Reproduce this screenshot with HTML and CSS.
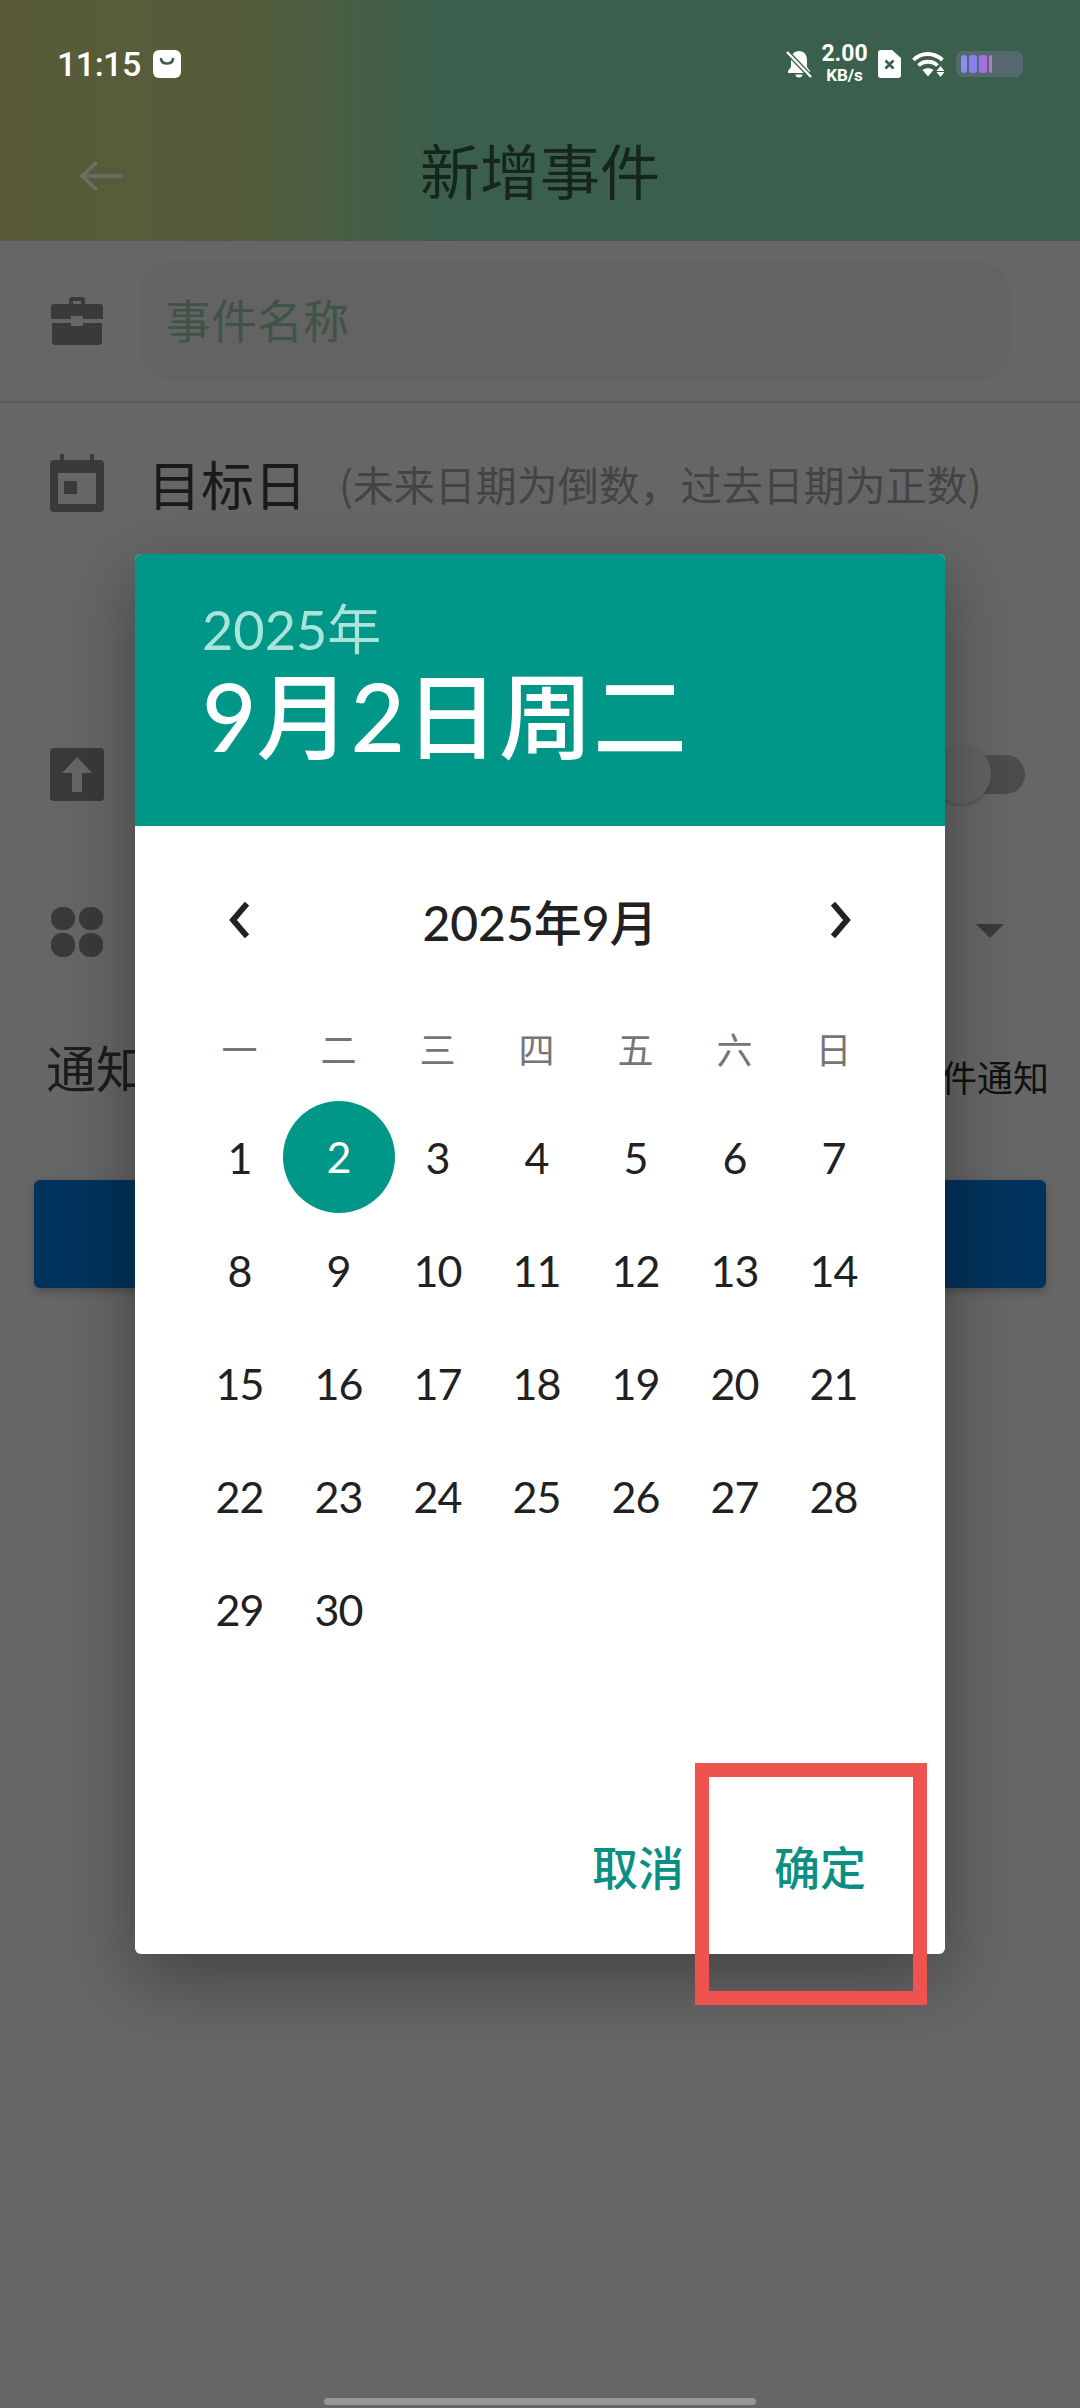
FILE: index.html
```html
<!DOCTYPE html>
<html lang="zh-CN">
<head>
<meta charset="UTF-8">
<meta name="viewport" content="width=device-width, initial-scale=1.0">
<title>新增事件</title>
<link rel="stylesheet" href="styles.css">
</head>
<body>
<div class="phone">
  <header class="top">
    <div class="status">
      <div class="status-left">
        <span class="clock">11:15</span>
        <svg class="note" viewBox="0 0 28 28"><rect width="28" height="28" rx="6" fill="#fff"/><path d="M8 9c1 6 11 6 12 0" fill="none" stroke="#3f5f4a" stroke-width="2.6" stroke-linecap="round"/></svg>
      </div>
      <div class="status-right">
        <svg class="bell" viewBox="0 0 26 28"><path d="M13 1c-5 0-8 3.500-8 9v7l-3 4v2h22v-2l-3-4v-7c0-5.500-3-9-8-9zM9.500 24.500a3.500 3 0 0 0 7 0z" fill="#fff"/><path d="M1 2l24 25" stroke="#3a604d" stroke-width="5"/><path d="M1 2l24 25" stroke="#fff" stroke-width="2.400"/></svg>
        <div class="speed"><span class="speed-num">2.00</span><span class="speed-unit">KB/s</span></div>
        <svg class="sim" viewBox="0 0 23 28"><path d="M3 0h11l9 8v17a3 3 0 0 1-3 3H3a3 3 0 0 1-3-3V3a3 3 0 0 1 3-3z" fill="#fff"/><path d="M7.500 10.500l8 8M15.500 10.500l-8 8" stroke="#3a604d" stroke-width="2.600"/></svg>
        <svg class="wifi" viewBox="0 0 34 26"><path d="M1.500 9c8-8 20-8 29 0M6.500 14.500c5-5 14-5 19 0" fill="none" stroke="#fff" stroke-width="3.800"/><path d="M10.500 19c3-2.500 8-2.500 11 0l-5.500 6.500z" fill="#fff"/><path d="M28.500 15l4 5h-8zM28.500 26l4-5h-8z" fill="#fff"/></svg>
        <div class="battery"><span class="cell c1"></span><span class="cell c2"></span><span class="cell c3"></span><span class="cell c4"></span></div>
      </div>
    </div>
    <div class="appbar">
      <svg class="back" viewBox="0 0 44 32"><path d="M18 2L3 16l15 14M3 16h41" fill="none" stroke="#667263" stroke-width="3.500"/></svg>
      <h1>新增事件</h1>
    </div>
  </header>

  <main class="form">
    <div class="row name-row">
      <svg class="icon" viewBox="0 0 54 50"><path d="M19 9V4a3 3 0 0 1 3-3h10a3 3 0 0 1 3 3v5h-4V5h-8v4z" fill="#3a3a3a"/><path d="M4 8h46a3 3 0 0 1 3 3v12H33v-3H21v3H1V11a3 3 0 0 1 3-3zM2 27h19v3h12v-3h19v19a3 3 0 0 1-3 3H5a3 3 0 0 1-3-3z" fill="#3a3a3a"/></svg>
      <div class="name-box">事件名称</div>
    </div>
    <div class="row date-row">
      <svg class="icon" viewBox="0 0 54 58"><path d="M10 0h4v6h26V0h4v6h6a4 4 0 0 1 4 4v44a4 4 0 0 1-4 4H4a4 4 0 0 1-4-4V10a4 4 0 0 1 4-4h6zM8 19v31h38V19z" fill="#3a3a3a" fill-rule="evenodd"/><rect x="14" y="27" width="13" height="13" fill="#3a3a3a"/></svg>
      <span class="date-label">目标日</span>
      <span class="date-hint">(未来日期为倒数，过去日期为正数)</span>
    </div>
    <div class="row pin-row">
      <svg class="icon" viewBox="0 0 54 53"><rect width="54" height="53" rx="4" fill="#3a3a3a"/><path d="M27 9l15 16H32v19H22V25H12z" fill="#666"/></svg>
      <div class="switch"><span class="switch-track"></span><span class="switch-thumb"></span></div>
    </div>
    <div class="row group-row">
      <svg class="icon" viewBox="0 0 54 50"><rect x="1" y="0" width="24" height="23" rx="11" fill="#3a3a3a"/><rect x="29" y="0" width="24" height="23" rx="11" fill="#3a3a3a"/><rect x="1" y="26" width="24" height="24" rx="11" fill="#3a3a3a"/><rect x="29" y="26" width="24" height="24" rx="11" fill="#3a3a3a"/></svg>
      <span class="caret"></span>
    </div>
    <div class="row notify-row">
      <span class="notify-label">通知</span>
      <span class="notify-value">邮件通知</span>
    </div>
    <div class="save"></div>
  </main>

  <section class="dialog">
    <div class="dialog-head">
      <div class="head-year">2025年</div>
      <div class="head-date">9月2日周二</div>
    </div>
    <div class="cal">
      <div class="cal-nav">
        <svg class="chev" viewBox="0 0 24 36"><path d="M18 4L6 18l12 14" fill="none" stroke="#222" stroke-width="5"/></svg>
        <span class="cal-title">2025年9月</span>
        <svg class="chev" viewBox="0 0 24 36"><path d="M6 4l12 14L6 32" fill="none" stroke="#222" stroke-width="5"/></svg>
      </div>
      <div class="weekdays">
        <span>一</span><span>二</span><span>三</span><span>四</span><span>五</span><span>六</span><span>日</span>
      </div>
      <div class="days">
        <span>1</span><span class="picked">2</span><span>3</span><span>4</span><span>5</span><span>6</span><span>7</span>
        <span>8</span><span>9</span><span>10</span><span>11</span><span>12</span><span>13</span><span>14</span>
        <span>15</span><span>16</span><span>17</span><span>18</span><span>19</span><span>20</span><span>21</span>
        <span>22</span><span>23</span><span>24</span><span>25</span><span>26</span><span>27</span><span>28</span>
        <span>29</span><span>30</span>
      </div>
    </div>
    <div class="actions">
      <span>取消</span>
      <span>确定</span>
    </div>
  </section>

  <div class="mark"></div>
  <div class="homebar"></div>
</div>
</body>
</html>
```

FILE: styles.css
```css
* {
  box-sizing: border-box;
}
body {
  margin: 0;
  font-family: Lato, "Noto Sans CJK SC", sans-serif;
}
.phone {
  position: relative;
  width: 1080px;
  height: 2408px;
  overflow: hidden;
  background: #666;
}
.top {
  height: 241px;
  background: linear-gradient(90deg, #595b37 0%, #555c3b 22%, #3a604d 42%, #3a604d 100%);
}
.status {
  display: flex;
  justify-content: space-between;
  align-items: center;
  height: 128px;
  padding: 0 57px 0 57px;
}
.status-left {
  display: flex;
  align-items: center;
  gap: 15px;
}
.clock {
  width: 81px;
  color: #fff;
  font-family: Roboto, sans-serif;
  font-size: 34px;
  font-weight: 500;
  letter-spacing: -0.5px;
}
.note {
  width: 28px;
  height: 28px;
}
.status-right {
  display: flex;
  align-items: center;
}
.bell {
  width: 26px;
  height: 28px;
}
.speed {
  display: flex;
  flex-direction: column;
  align-items: center;
  width: 45px;
  margin: 0 11px 0 10px;
  color: #fff;
  font-family: Roboto, sans-serif;
  font-weight: 700;
}
.speed-num {
  font-size: 23px;
  line-height: 22px;
}
.speed-unit {
  font-size: 17px;
  line-height: 20px;
}
.sim {
  width: 23px;
  height: 28px;
}
.wifi {
  width: 34px;
  height: 26px;
  margin: 0 10px 0 11px;
}
.battery {
  display: flex;
  gap: 2px;
  width: 67px;
  height: 26px;
  padding: 4px 5px;
  border-radius: 8px;
  background: #56696f;
}
.cell {
  width: 6px;
  border-radius: 3px;
}
.c1 {
  background: #8f8cf0;
}
.c2 {
  width: 8px;
  background: #8e7cf0;
}
.c3 {
  width: 8px;
  background: #a56fe0;
}
.c4 {
  width: 3px;
  background: #b478cf;
}
.appbar {
  position: relative;
  display: flex;
  justify-content: center;
  align-items: center;
  height: 80px;
}
.back {
  position: absolute;
  left: 79px;
  top: 32px;
  width: 44px;
  height: 32px;
}
h1 {
  margin: 0;
  color: #17261d;
  font-family: "Noto Sans CJK SC", sans-serif;
  font-size: 60px;
  font-weight: 400;
}
.row {
  display: flex;
  align-items: center;
  padding: 0 50px;
}
.icon {
  flex: none;
  width: 54px;
}
.name-row {
  height: 162px;
  border-bottom: 2px solid #5a5a5a;
}
.name-box {
  flex: 1;
  height: 118px;
  margin-left: 37px;
  margin-right: 20px;
  padding-left: 24px;
  border-radius: 30px;
  background: #636363;
  color: #3e5447;
  font-family: "Noto Sans CJK SC", sans-serif;
  font-size: 46px;
  line-height: 112px;
}
.date-row {
  height: 160px;
}
.date-label {
  margin-left: 44px;
  color: #1a1a1a;
  font-family: "Noto Sans CJK SC", sans-serif;
  font-size: 53px;
}
.date-hint {
  margin-left: 32px;
  color: #444;
  font-family: "Noto Sans CJK SC", sans-serif;
  font-size: 41px;
  white-space: nowrap;
}
.pin-row {
  justify-content: space-between;
  height: 158px;
  margin-top: 132px;
  padding-right: 55px;
}
.switch {
  position: relative;
  width: 92px;
  height: 60px;
}
.switch-track {
  position: absolute;
  right: 0;
  top: 11px;
  width: 72px;
  height: 39px;
  border-radius: 20px;
  background: #4c4c4c;
}
.switch-thumb {
  position: absolute;
  left: -2px;
  top: 0;
  width: 60px;
  height: 60px;
  border-radius: 50%;
  background: #626262;
  box-shadow: 0 2px 3px rgba(0, 0, 0, 0.2);
}
.group-row {
  justify-content: space-between;
  height: 158px;
  padding-right: 76px;
}
.caret {
  width: 0;
  height: 0;
  margin-top: -2px;
  border-left: 14px solid transparent;
  border-right: 14px solid transparent;
  border-top: 14px solid #3a3a3a;
}
.notify-row {
  justify-content: space-between;
  height: 110px;
  padding: 0 31px 0 46px;
  font-family: "Noto Sans CJK SC", sans-serif;
  color: #1c1c1c;
}
.notify-label {
  font-size: 50px;
}
.notify-value {
  margin-top: 20px;
  color: #111;
  font-size: 36px;
}
.save {
  height: 108px;
  margin: 59px 34px 0 34px;
  border-radius: 6px;
  background: #00335c;
  box-shadow: 0 3px 10px rgba(0, 0, 0, 0.25);
}
.dialog {
  position: absolute;
  left: 135px;
  top: 554px;
  display: flex;
  flex-direction: column;
  width: 810px;
  height: 1400px;
  overflow: hidden;
  border-radius: 6px;
  background: #fff;
  box-shadow: 0 24px 70px rgba(0, 0, 0, 0.35);
}
.dialog-head {
  height: 272px;
  padding: 40px 0 0 67px;
  background: #009688;
}
.head-year {
  color: #a8e4da;
  font-size: 54px;
  line-height: 72px;
}
.head-date {
  margin-top: 4px;
  color: #fff;
  font-size: 94px;
  font-weight: 500;
  line-height: 92px;
}
.cal {
  flex: 1;
  padding: 0 55px;
}
.cal-nav {
  display: flex;
  justify-content: space-between;
  align-items: center;
  height: 96px;
  margin-top: 46px;
  padding: 0 36px;
}
.chev {
  width: 28px;
  height: 42px;
}
.cal-title {
  color: #212121;
  font-size: 48px;
  font-weight: 500;
}
.weekdays {
  display: grid;
  grid-template-columns: repeat(7, 99px);
  margin-top: 53px;
  color: #757575;
  font-family: "Noto Sans CJK SC", sans-serif;
  font-size: 36px;
  line-height: 54px;
  text-align: center;
}
.days {
  display: grid;
  grid-template-columns: repeat(7, 99px);
  grid-auto-rows: 113px;
  margin-top: 26px;
  color: #212121;
  font-size: 43px;
  letter-spacing: -1px;
  text-align: center;
}
.days span {
  line-height: 113px;
}
.days .picked {
  width: 112px;
  height: 112px;
  margin-left: -6.500px;
  border-radius: 50%;
  background: #009688;
  color: #fff;
  line-height: 112px;
}
.actions {
  display: flex;
  justify-content: flex-end;
  gap: 90px;
  padding: 0 79px 56px 0;
  color: #0b8f82;
  font-family: "Noto Sans CJK SC", sans-serif;
  font-size: 46px;
  font-weight: 500;
}
.mark {
  position: absolute;
  left: 695px;
  top: 1763px;
  width: 232px;
  height: 242px;
  border: 14px solid #ef5350;
}
.homebar {
  position: absolute;
  left: 324px;
  top: 2398px;
  width: 432px;
  height: 7px;
  border-radius: 4px;
  background: #979797;
}
```
